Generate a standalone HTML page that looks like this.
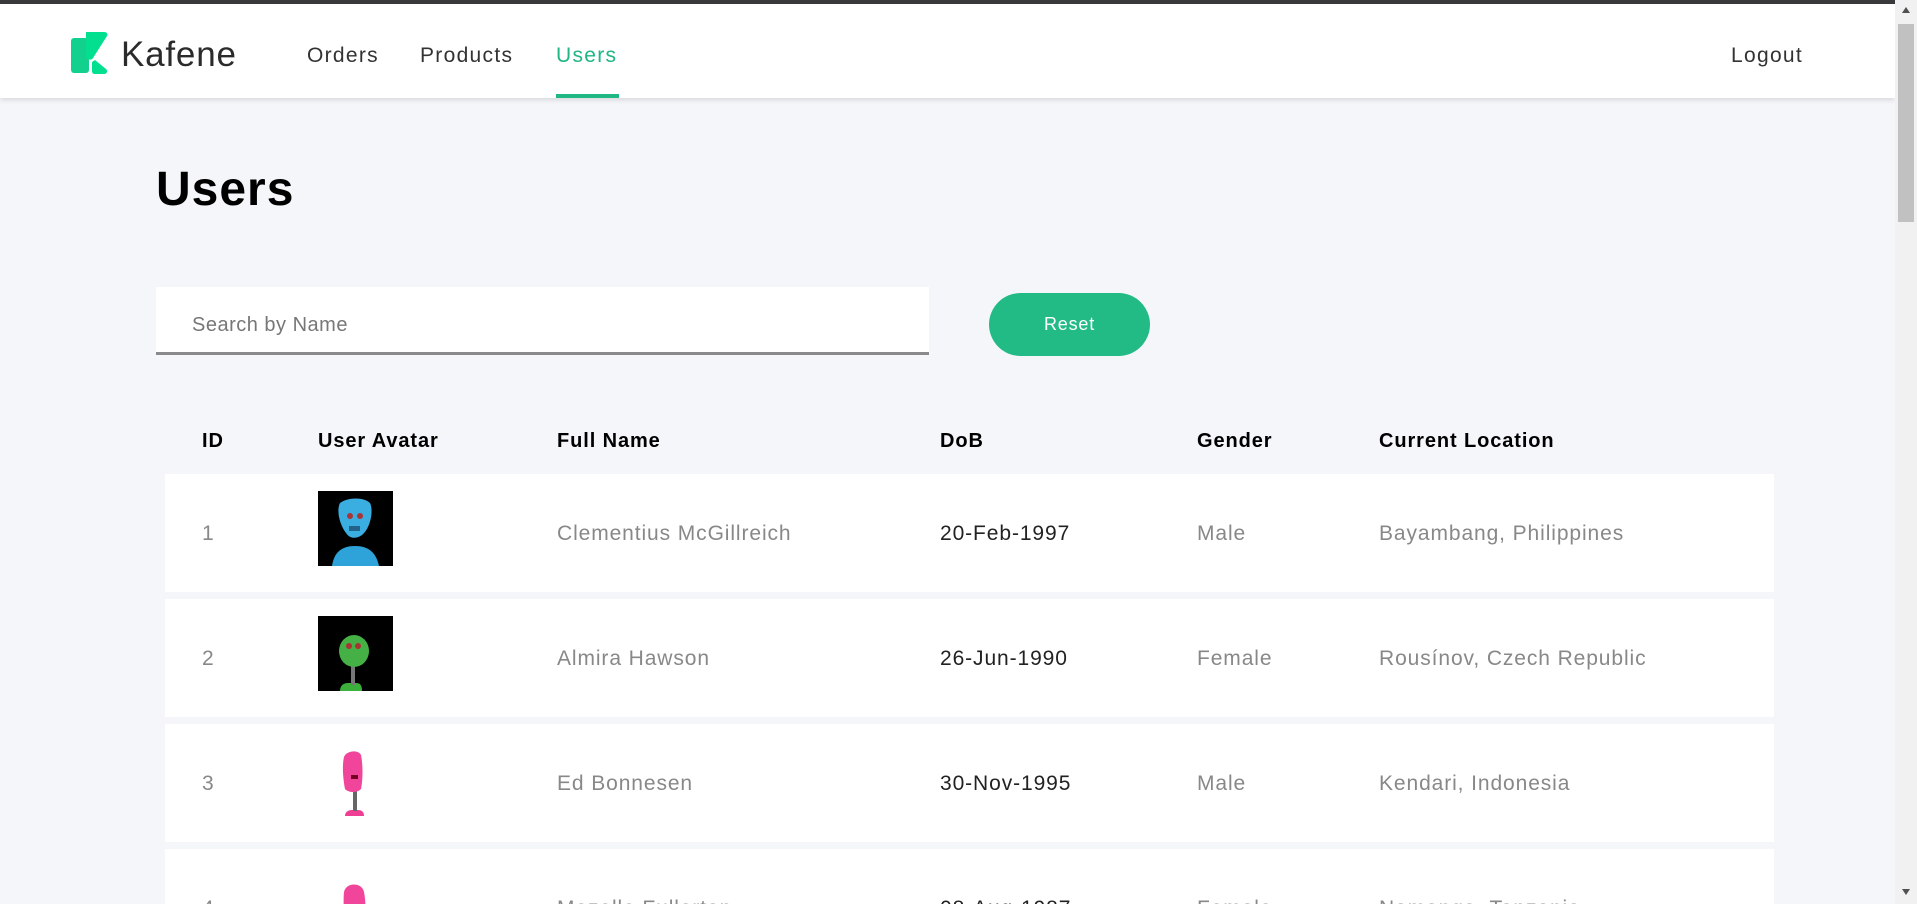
<!DOCTYPE html>
<html><head><meta charset="utf-8"><style>
*{margin:0;padding:0;box-sizing:border-box}
html{width:1917px;height:904px;overflow:hidden}
body{width:1917px;height:904px;overflow:hidden;background:#f5f6fa;font-family:"Liberation Sans",sans-serif;position:relative}
.top{position:absolute;left:0;top:0;width:1917px;height:4px;background:#3a3a3c}
.hdr{position:absolute;left:0;top:4px;width:1895px;height:94px;background:#fff;box-shadow:0 2px 5px rgba(0,0,0,.12)}
.logo{position:absolute;left:71px;top:28px}
.brand{position:absolute;left:121px;top:31px;font-size:35px;color:#2b2b2b;letter-spacing:.8px}
.nav{position:absolute;top:40px;font-size:21px;color:#333;letter-spacing:1.3px}
.ul{position:absolute;left:556px;top:90px;width:63px;height:4px;background:#1fb783}
.sb{position:absolute;left:1895px;top:0;width:22px;height:904px;background:#f1f1f1}
.thumb{position:absolute;left:1898px;top:24px;width:16px;height:198px;background:#c1c1c1}
h1{position:absolute;left:156px;top:162px;font-size:48px;font-weight:bold;color:#000;letter-spacing:1px}
.search{position:absolute;left:156px;top:287px;width:773px;height:68px;background:#fff;border-bottom:3px solid #8a8a8a}
.search span{position:absolute;left:36px;top:27px;font-size:20px;color:#777;letter-spacing:.5px}
.btn{position:absolute;left:989px;top:293px;width:161px;height:63px;border-radius:32px;background:#22bb86;color:#fff;font-size:18px;text-align:center;line-height:63px;letter-spacing:.8px}
.th{position:absolute;top:430px;font-size:20px;font-weight:bold;color:#000;letter-spacing:.9px}
.row{position:absolute;left:165px;width:1609px;height:118px;background:#fff}
.c{position:absolute;top:48px;font-size:21px;color:#888;letter-spacing:.9px}
.d{color:#222}
.av{position:absolute;left:153px;top:17px;width:75px;height:75px}
</style></head><body>
<div class="top"></div>
<div class="hdr">
<svg class="logo" width="38" height="42" viewBox="0 0 38 42"><rect x="0" y="6" width="18" height="35" rx="3" fill="#12d18e"/><path d="M15 0h18c3 0 4 2 3 4L22 26c-1 2-3 2-5 1l-2-1z" fill="#02e08f"/><path d="M21 30l3-2 11 9c2 2 1 5-2 5h-9c-2 0-3-1-3-3z" fill="#02e08f"/></svg>
<div class="brand">Kafene</div>
<div class="nav" style="left:307px">Orders</div>
<div class="nav" style="left:420px">Products</div>
<div class="nav" style="left:556px;color:#1fb783">Users</div>
<div class="ul"></div>
<div class="nav" style="left:1731px">Logout</div>
</div>
<div class="sb"></div><div class="thumb"></div>
<svg style="position:absolute;left:1901px;top:6px" width="10" height="8"><path d="M5 1L9 7H1z" fill="#505050"/></svg>
<svg style="position:absolute;left:1901px;top:888px" width="10" height="8"><path d="M5 7L9 1H1z" fill="#505050"/></svg>
<h1>Users</h1>
<div class="search"><span>Search by Name</span></div>
<div class="btn">Reset</div>
<div class="th" style="left:202px">ID</div>
<div class="th" style="left:318px">User Avatar</div>
<div class="th" style="left:557px">Full Name</div>
<div class="th" style="left:940px">DoB</div>
<div class="th" style="left:1197px">Gender</div>
<div class="th" style="left:1379px">Current Location</div>

<div class="row" style="top:474px">
<div class="c" style="left:37px">1</div>
<svg class="av" viewBox="0 0 75 75"><rect width="75" height="75" fill="#000"/><path d="M14 75c2-14 10-20 23-20s21 6 24 20z" fill="#2ea3d9"/><path d="M22 12c8-6 24-6 30 0 4 8 0 26-8 32-6 4-12 4-16-2-6-8-10-22-6-30z" fill="#3aaee0"/><circle cx="32" cy="25" r="3" fill="#a33"/><circle cx="42" cy="25" r="3" fill="#a33"/><rect x="31" y="35" width="11" height="5" fill="#23628a"/></svg>
<div class="c" style="left:392px">Clementius McGillreich</div>
<div class="c d" style="left:775px">20-Feb-1997</div>
<div class="c" style="left:1032px">Male</div>
<div class="c" style="left:1214px">Bayambang, Philippines</div>
</div>

<div class="row" style="top:599px">
<div class="c" style="left:37px">2</div>
<svg class="av" viewBox="0 0 75 75"><rect width="75" height="75" fill="#000"/><path d="M22 75c0-6 4-8 8-8h8c4 0 6 2 6 8z" fill="#3bb03b"/><rect x="33" y="45" width="4" height="24" fill="#777"/><ellipse cx="36" cy="35" rx="15" ry="16" fill="#45b045"/><circle cx="31" cy="30" r="3" fill="#a33"/><circle cx="40" cy="30" r="3" fill="#a33"/></svg>
<div class="c" style="left:392px">Almira Hawson</div>
<div class="c d" style="left:775px">26-Jun-1990</div>
<div class="c" style="left:1032px">Female</div>
<div class="c" style="left:1214px">Rousínov, Czech Republic</div>
</div>

<div class="row" style="top:724px">
<div class="c" style="left:37px">3</div>
<svg class="av" viewBox="0 0 75 75"><path d="M27 75c0-4 3-6 7-6h6c4 0 6 2 6 6z" fill="#ee3f94"/><rect x="35" y="50" width="4" height="20" fill="#666"/><path d="M26 16c2-6 14-8 17-2 2 10 2 24 0 34-4 4-12 4-16 0-2-10-3-24-1-32z" fill="#f0459a"/><rect x="33" y="34" width="7" height="4" fill="#702"/></svg>
<div class="c" style="left:392px">Ed Bonnesen</div>
<div class="c d" style="left:775px">30-Nov-1995</div>
<div class="c" style="left:1032px">Male</div>
<div class="c" style="left:1214px">Kendari, Indonesia</div>
</div>

<div class="row" style="top:849px">
<div class="c" style="left:37px">4</div>
<svg class="av" viewBox="0 0 75 75"><path d="M26 26c2-10 18-10 20 0 2 10 2 24 0 34-4 4-14 4-18 0-2-10-3-24-2-34z" fill="#f0459a"/></svg>
<div class="c" style="left:392px">Mozelle Fullerton</div>
<div class="c d" style="left:775px">08-Aug-1987</div>
<div class="c" style="left:1032px">Female</div>
<div class="c" style="left:1214px">Namanga, Tanzania</div>
</div>
</body></html>
